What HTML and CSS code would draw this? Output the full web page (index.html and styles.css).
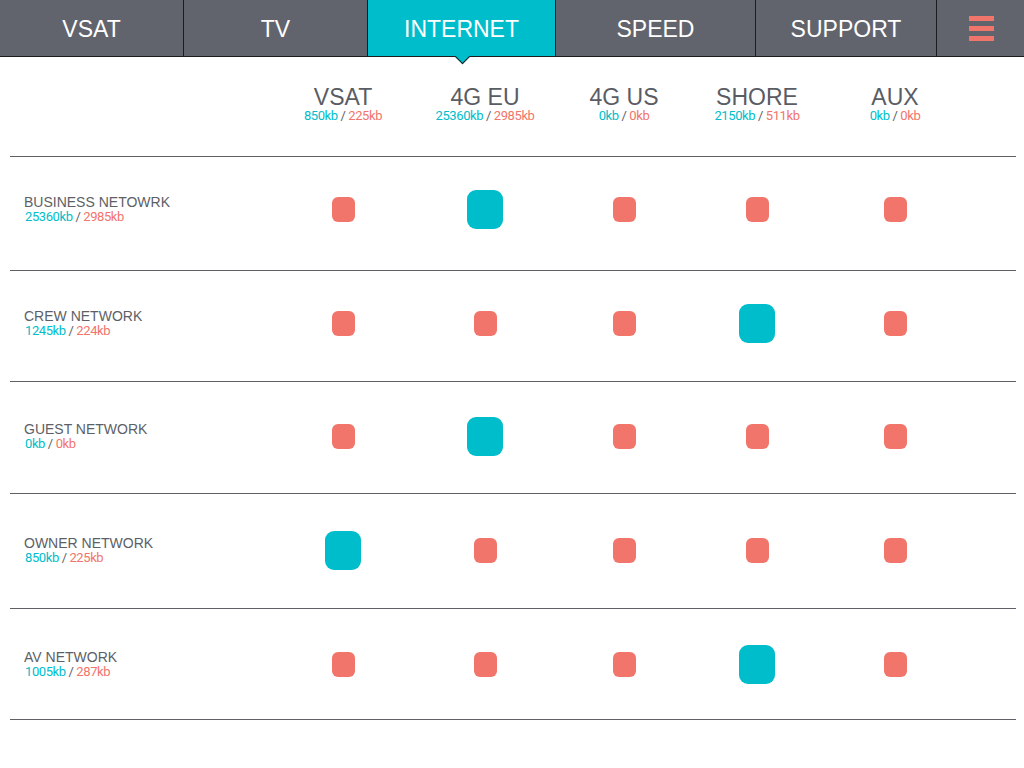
FILE: index.html
```html
<!DOCTYPE html>
<html lang="en">
<head>
<meta charset="utf-8">
<title>Internet</title>
<link rel="stylesheet" href="styles.css">
</head>
<body>
<nav class="topnav">
  <a class="tab tab-vsat">VSAT</a>
  <a class="tab tab-tv">TV</a>
  <a class="tab tab-internet is-active">INTERNET</a>
  <a class="tab tab-speed">SPEED</a>
  <a class="tab tab-support">SUPPORT</a>
  <a class="tab tab-menu"><span class="burger"><i></i><i></i><i></i></span></a>
</nav>

<main class="matrix">
  <div class="mrow head">
    <div class="label-cell"></div>
    <div class="col-head"><div class="col-title">VSAT</div><div class="rate"><span class="down">850kb</span> / <span class="up">225kb</span></div></div>
    <div class="col-head"><div class="col-title">4G EU</div><div class="rate"><span class="down">25360kb</span> / <span class="up">2985kb</span></div></div>
    <div class="col-head"><div class="col-title">4G US</div><div class="rate"><span class="down">0kb</span> / <span class="up">0kb</span></div></div>
    <div class="col-head"><div class="col-title">SHORE</div><div class="rate"><span class="down">2150kb</span> / <span class="up">511kb</span></div></div>
    <div class="col-head"><div class="col-title">AUX</div><div class="rate"><span class="down">0kb</span> / <span class="up">0kb</span></div></div>
  </div>

  <div class="mrow row-business">
    <div class="label-cell"><div class="net-name">BUSINESS NETOWRK</div><div class="rate"><span class="down">25360kb</span> / <span class="up">2985kb</span></div></div>
    <div class="cell"><span class="dot"></span></div>
    <div class="cell"><span class="dot dot-on"></span></div>
    <div class="cell"><span class="dot"></span></div>
    <div class="cell"><span class="dot"></span></div>
    <div class="cell"><span class="dot"></span></div>
  </div>

  <div class="mrow row-crew">
    <div class="label-cell"><div class="net-name">CREW NETWORK</div><div class="rate"><span class="down">1245kb</span> / <span class="up">224kb</span></div></div>
    <div class="cell"><span class="dot"></span></div>
    <div class="cell"><span class="dot"></span></div>
    <div class="cell"><span class="dot"></span></div>
    <div class="cell"><span class="dot dot-on"></span></div>
    <div class="cell"><span class="dot"></span></div>
  </div>

  <div class="mrow row-guest">
    <div class="label-cell"><div class="net-name">GUEST NETWORK</div><div class="rate"><span class="down">0kb</span> / <span class="up">0kb</span></div></div>
    <div class="cell"><span class="dot"></span></div>
    <div class="cell"><span class="dot dot-on"></span></div>
    <div class="cell"><span class="dot"></span></div>
    <div class="cell"><span class="dot"></span></div>
    <div class="cell"><span class="dot"></span></div>
  </div>

  <div class="mrow row-owner">
    <div class="label-cell"><div class="net-name">OWNER NETWORK</div><div class="rate"><span class="down">850kb</span> / <span class="up">225kb</span></div></div>
    <div class="cell"><span class="dot dot-on"></span></div>
    <div class="cell"><span class="dot"></span></div>
    <div class="cell"><span class="dot"></span></div>
    <div class="cell"><span class="dot"></span></div>
    <div class="cell"><span class="dot"></span></div>
  </div>

  <div class="mrow row-av">
    <div class="label-cell"><div class="net-name">AV NETWORK</div><div class="rate"><span class="down">1005kb</span> / <span class="up">287kb</span></div></div>
    <div class="cell"><span class="dot"></span></div>
    <div class="cell"><span class="dot"></span></div>
    <div class="cell"><span class="dot"></span></div>
    <div class="cell"><span class="dot dot-on"></span></div>
    <div class="cell"><span class="dot"></span></div>
  </div>
</main>
</body>
</html>
```

FILE: styles.css
```css
* { box-sizing: border-box; }

body {
  margin: 0;
  background: #ffffff;
  font-family: "Liberation Sans", Arial, sans-serif;
  color: #5d5f67;
}

/* ---------- top navigation ---------- */
.topnav {
  display: flex;
  height: 57px;
  background: #62646d;
  border-bottom: 1px solid #1c1c1f;
}

.tab {
  position: relative;
  display: flex;
  align-items: center;
  justify-content: center;
  height: 56px;
  padding-top: 2px;
  border-right: 1px solid #1c1c1f;
  color: #ffffff;
  font-size: 23px;
  text-decoration: none;
}

.tab-vsat { width: 184px; }
.tab-tv { width: 184px; }
.tab-internet { width: 188px; }
.tab-speed { width: 200px; }
.tab-support { width: 181px; }
.tab-menu { flex: 1; border-right: 0; padding: 0 0 0 2px; }

.tab.is-active { background: #00bdcb; }

.tab.is-active::after {
  content: "";
  position: absolute;
  left: 50%;
  bottom: -6px;
  width: 10px;
  height: 10px;
  margin-left: -5px;
  background: #00bdcb;
  border-right: 1px solid #1c1c1f;
  border-bottom: 1px solid #1c1c1f;
  transform: rotate(45deg);
}

.burger {
  display: flex;
  flex-direction: column;
  gap: 5px;
  width: 25px;
}

.burger i {
  display: block;
  height: 5px;
  background: #f2756b;
}

/* ---------- matrix ---------- */
.matrix {
  margin: 0 8px 0 10px;
}

.mrow {
  display: grid;
  grid-template-columns: 262px 142px 142px 136px 130px 146px 1fr;
  align-items: center;
  height: 113px;
  padding-bottom: 7px;
  border-bottom: 1px solid #5f6068;
}

.mrow.head {
  height: 100px;
  align-items: start;
  padding: 28px 0 0;
}

.row-business { height: 114px; padding-bottom: 9px; }
.row-crew { height: 111px; padding-bottom: 6px; }
.row-guest { height: 112px; padding-bottom: 3px; }
.row-owner { height: 115px; padding-bottom: 1px; }
.row-av { height: 111px; padding-bottom: 0; }

.col-head {
  text-align: center;
}

.col-title {
  font-size: 23px;
  line-height: 24px;
  color: #5a5c64;
}

.rate {
  font-family: Roboto, "Liberation Sans", sans-serif;
  font-size: 13px;
  line-height: 14px;
  letter-spacing: -0.4px;
  color: #5d5f67;
}

.rate .down { color: #00bdcb; }
.rate .up { color: #f2756b; }

.label-cell {
  padding-left: 14px;
}

.net-name {
  font-size: 14px;
  line-height: 15px;
  color: #5d5f67;
}

.label-cell .rate { padding-left: 1px; }

.cell {
  display: flex;
  justify-content: center;
  align-items: center;
}

.dot {
  display: block;
  width: 23px;
  height: 25px;
  border-radius: 6px;
  background: #f2756b;
}

.dot.dot-on {
  width: 36px;
  height: 39px;
  border-radius: 9px;
  background: #00bdcb;
}
```
